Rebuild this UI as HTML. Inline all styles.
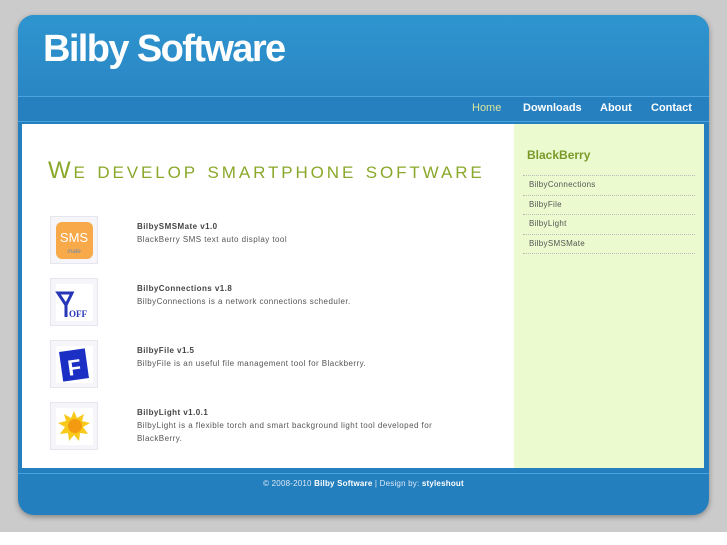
<!DOCTYPE html>
<html><head><style>
*{margin:0;padding:0;box-sizing:border-box}
body{width:727px;height:545px;background:#fff;font-family:"Liberation Sans",sans-serif;position:relative;overflow:hidden}
.bg{position:absolute;left:0;top:0;width:727px;height:532px;background:#cbcbcb}
.wrap{position:absolute;left:18px;top:15px;width:691px;height:500px;border-radius:16px;background:#247fbf;box-shadow:0 2px 6px rgba(0,0,0,.35);overflow:hidden}
.hdr{position:absolute;left:0;top:0;width:691px;height:81px;background:linear-gradient(#2e95cf,#2a86c4)}
.logo{position:absolute;left:25px;top:13px;color:#fff;font-size:38px;font-weight:bold;letter-spacing:-1.6px}
.nav{position:absolute;left:0;top:81px;width:691px;height:26px;background:#2680c0;border-top:1px solid #4aa3dc;border-bottom:1px solid #4aa3dc}
.nav span{position:absolute;top:5px;color:#fff;font-weight:bold;font-size:11px}
.main{position:absolute;left:4px;top:109px;width:492px;height:344px;background:#fff}
.side{position:absolute;left:496px;top:109px;width:190px;height:344px;background:#ebfbcf}
.fline{position:absolute;left:0;top:458px;width:691px;height:1px;background:#4aa3dc}
.foot{position:absolute;left:0;top:464px;width:691px;text-align:center;color:#dbe9f5;font-size:8px;letter-spacing:0.2px}
.foot b{color:#fff}
h1{position:absolute;left:26px;top:33px;color:#8aa82a;font-weight:normal;font-variant:small-caps;font-size:24px;letter-spacing:2.9px;white-space:nowrap}
.item{position:absolute;left:28px;width:48px;height:48px;background:#f6f6fa;border:1px solid #e6e6ee}
.t{position:absolute;left:115px;font-size:8px;color:#555;line-height:13px;width:320px;letter-spacing:0.45px}
.t b{color:#444}
.side h2{position:absolute;left:13px;top:24px;font-size:12px;color:#7a9a2a}
.side ul{position:absolute;left:9px;top:51px;width:172px;list-style:none;border-top:1px dotted #bbb}
.side li{height:19.5px;border-bottom:1px dotted #bbb;font-size:8px;color:#555;padding:4px 0 0 6px;letter-spacing:0.3px}
</style></head><body>
<div class="bg"></div>
<div class="wrap">
<div class="hdr"><div class="logo">Bilby Software</div></div>
<div class="nav"><span style="left:454px;color:#d8e59c;font-weight:normal">Home</span><span style="left:505px">Downloads</span><span style="left:582px">About</span><span style="left:633px">Contact</span></div>
<div class="main">
<h1>We develop smartphone software</h1>
<div class="item" style="top:92px"><svg width="46" height="46"><rect x="5" y="5" width="37" height="37" rx="6" fill="#f8a94a"/><text x="23" y="25" font-size="13" fill="#fff" text-anchor="middle" font-family="Liberation Sans">SMS</text><text x="23" y="36" font-size="6" fill="#6a8ab0" text-anchor="middle" font-style="italic">mate</text></svg></div>
<div class="t" style="top:96px"><b>BilbySMSMate v1.0</b><br>BlackBerry SMS text auto display tool</div>
<div class="item" style="top:154px"><svg width="46" height="46"><rect x="5" y="5" width="37" height="37" fill="#fff"/><path d="M7 14 L21 14 L15 26 Z" fill="none" stroke="#2636b8" stroke-width="3"/><path d="M15 26 V38" stroke="#2636b8" stroke-width="3"/><text x="18" y="38" font-size="9" font-weight="bold" fill="#2636b8" font-family="Liberation Serif">OFF</text></svg></div>
<div class="t" style="top:158px"><b>BilbyConnections v1.8</b><br>BilbyConnections is a network connections scheduler.</div>
<div class="item" style="top:216px"><svg width="46" height="46"><rect x="5" y="5" width="37" height="37" fill="#fff"/><rect x="10" y="9" width="26" height="30" fill="#1c2fc4" transform="rotate(-8 23 24)"/><text x="23" y="34" font-size="22" font-weight="bold" fill="#fff" text-anchor="middle" transform="rotate(-8 23 24)">F</text></svg></div>
<div class="t" style="top:220px"><b>BilbyFile v1.5</b><br>BilbyFile is an useful file management tool for Blackberry.</div>
<div class="item" style="top:278px"><svg width="46" height="46"><rect x="5" y="5" width="37" height="37" fill="#fff"/><polygon points="23,8 26,15 33,11 31,18 39,20 32,24 37,31 29,30 28,38 23,32 18,38 17,30 9,31 14,24 7,20 15,18 13,11 20,15" fill="#f8c81a"/><circle cx="24" cy="23" r="7" fill="#f39a10"/></svg></div>
<div class="t" style="top:282px"><b>BilbyLight v1.0.1</b><br>BilbyLight is a flexible torch and smart background light tool developed for BlackBerry.</div>
</div>
<div class="side"><h2>BlackBerry</h2><ul><li>BilbyConnections</li><li>BilbyFile</li><li>BilbyLight</li><li>BilbySMSMate</li></ul></div>
<div class="fline"></div>
<div class="foot">© 2008-2010 <b>Bilby Software</b> | Design by: <b>styleshout</b></div>
</div>
</body></html>
